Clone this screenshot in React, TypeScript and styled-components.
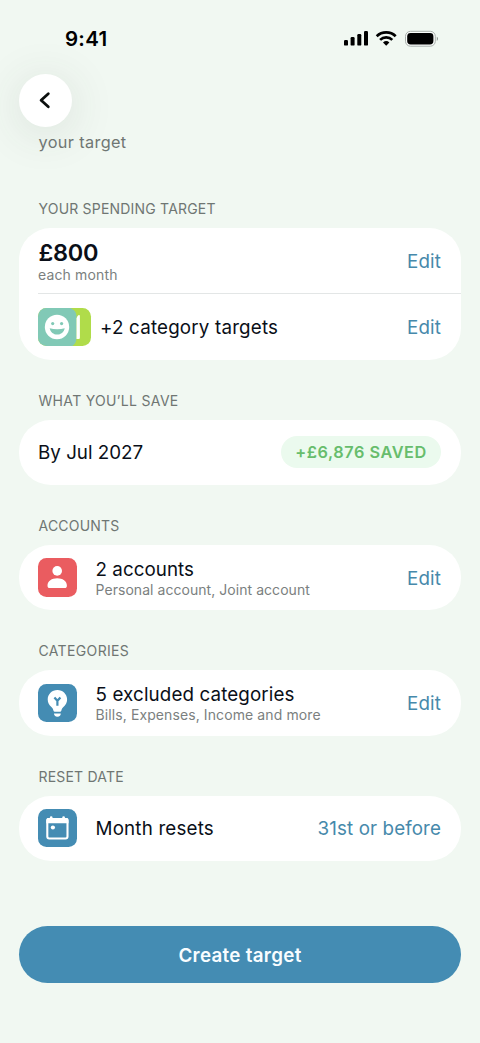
import React from "react";
import styled, { createGlobalStyle } from "styled-components";

const GlobalStyle = createGlobalStyle`
  * { box-sizing: border-box; }
  body { margin: 0; background: #f1f8f2; }
`;

const Screen = styled.div`
  width: 480px;
  height: 1043px;
  overflow: hidden;
  background: #f1f8f2;
  font-family: Inter, "Liberation Sans", sans-serif;
  color: #0a0f18;
  display: flex;
  flex-direction: column;
`;

const StatusBar = styled.header`
  height: 74px;
  flex: none;
  display: flex;
  justify-content: space-between;
  padding: 26px 41px 0 65px;
`;

const Clock = styled.span`
  font-size: 20.5px;
  line-height: 26px;
  font-weight: 600;
  letter-spacing: 0.25px;
  color: #000;
`;

const StatusIcons = styled.div`
  display: flex;
  align-items: center;
  height: 26px;
`;

const BackButton = styled.button`
  width: 53px;
  height: 53px;
  flex: none;
  margin-left: 19px;
  padding: 0;
  border: 0;
  border-radius: 50%;
  background: #fff;
  box-shadow: 0 6px 44px 4px rgba(60, 66, 62, 0.1);
  display: flex;
  align-items: center;
  justify-content: center;
`;

const Intro = styled.p`
  margin: 3px 0 0 38.5px;
  height: 25px;
  line-height: 24px;
  font-size: 16.3px;
  letter-spacing: 0.35px;
  color: #6f7673;
`;

const Sections = styled.main`
  display: flex;
  flex-direction: column;
  gap: 31px;
  padding: 44px 19px 0;
`;

const Section = styled.section`
  display: flex;
  flex-direction: column;
  gap: 9px;
`;

const Label = styled.h2<{ $tracking: number }>`
  margin: 0 0 0 19.5px;
  height: 20px;
  line-height: 20px;
  font-size: 14px;
  font-weight: 400;
  letter-spacing: ${(p) => p.$tracking}px;
  color: #6f7673;
`;

const Card = styled.div`
  background: #fff;
  border-radius: 32px;
  overflow: hidden;
`;

const Row = styled.div<{ $divided?: boolean }>`
  display: flex;
  align-items: center;
  height: ${(p) => (p.$divided ? "66.4px" : "65.3px")};
  margin-left: 19px;
  padding-right: 20px;
  border-top: ${(p) => (p.$divided ? "1px solid #e3e6e6" : "0")};
`;

const Texts = styled.div<{ $gap?: number }>`
  display: flex;
  flex-direction: column;
  flex: 1;
  margin-left: ${(p) => p.$gap ?? 0}px;
  padding-top: 2px;
`;

const Title = styled.span<{ $tracking?: number }>`
  font-size: 18.8px;
  line-height: 22px;
  letter-spacing: ${(p) => p.$tracking ?? 0.12}px;
  white-space: nowrap;
`;

const Amount = styled.span`
  padding-left: 0.5px;
  font-size: 23.5px;
  line-height: 26px;
  font-weight: 600;
  letter-spacing: -0.3px;
`;

const Caption = styled.span<{ $tracking?: number }>`
  font-size: 14px;
  line-height: 18px;
  letter-spacing: ${(p) => p.$tracking ?? 0.05}px;
  color: #7b7f80;
  white-space: nowrap;
`;

const Action = styled.a`
  padding-top: 2px;
  font-size: 18.8px;
  line-height: 22px;
  letter-spacing: 0.1px;
  color: #4689ab;
  white-space: nowrap;
`;

const Pill = styled.span`
  height: 32px;
  width: 160px;
  border-radius: 16px;
  background: #ebfaee;
  color: #67bd6c;
  font-size: 16.3px;
  font-weight: 600;
  line-height: 32px;
  letter-spacing: 0.55px;
  text-align: center;
  white-space: nowrap;
`;

const Tile = styled.span<{ $color: string }>`
  width: 38.5px;
  height: 38.5px;
  flex: none;
  border-radius: 8.5px;
  background: ${(p) => p.$color};
  display: flex;
`;

const TileStack = styled.span`
  width: 53px;
  height: 38.5px;
  flex: none;
  border-radius: 8.5px;
  overflow: hidden;
  background: #b0dc4a;
  display: flex;
`;

const Submit = styled.button`
  width: 442px;
  height: 57px;
  flex: none;
  margin: 65px 0 0 19px;
  padding: 2px 0 0;
  border: 0;
  border-radius: 28.5px;
  background: #448cb3;
  color: #f8fdff;
  font-family: inherit;
  font-size: 18.8px;
  font-weight: 600;
  letter-spacing: 0.3px;
`;

const Signal = () => (
  <svg width="98" height="26" viewBox="341 26 98 26">
    <rect x="344" y="40" width="4" height="5.6" rx="1.2" />
    <rect x="350.6" y="37" width="4" height="8.6" rx="1.2" />
    <rect x="357.3" y="34" width="4" height="11.6" rx="1.2" />
    <rect x="364" y="31" width="4" height="14.6" rx="1.2" />
    <g fill="none" stroke="#000" strokeWidth="2.7">
      <path d="M376.7 36.2a13.7 13.7 0 0 1 19 0" />
      <path d="M380.1 39.9a8.8 8.8 0 0 1 12.2 0" />
    </g>
    <path d="M386.2 45.8l-3.2-3.2a4.7 4.7 0 0 1 6.4 0z" />
    <rect x="405.5" y="31.3" width="29.8" height="14.9" rx="5" fill="#fafdfb" stroke="#a9afab" strokeWidth="1" />
    <rect x="407.2" y="33" width="26.2" height="11.4" rx="3.4" />
    <path d="M436.8 36.8c1.6.6 1.6 3.5 0 4.1z" fill="#909692" />
  </svg>
);

const Smile = () => (
  <svg width="53" height="38.5" viewBox="0 0 53 38.5">
    <path d="M0 0H32.5C36 1.5 38.5 4.5 38.5 8.5V30C38.5 34 36.5 37 33.5 38.5H0z" fill="#81c9b6" />
    <circle cx="19" cy="19" r="12.2" fill="#fff" />
    <circle cx="14.7" cy="15.6" r="1.6" fill="#81c9b6" />
    <circle cx="23.6" cy="15.6" r="1.6" fill="#81c9b6" />
    <path d="M11.7 20.3c4.5 1.2 10.5 1.2 15 0-.8 4-3.8 6.3-7.5 6.3s-6.7-2.3-7.5-6.3z" fill="#81c9b6" />
    <path d="M38.5 10.5c.6-2 1.5-3.4 2.6-3.4.5 0 .8.3.8.9v21.500c0 1-.6 1.500-1.500 1.500h-1.900z" fill="#fff" />
  </svg>
);

const Person = () => (
  <svg width="38.5" height="38.5" viewBox="0 0 38.5 38.5" fill="#fff">
    <circle cx="19.2" cy="12.9" r="4.8" />
    <path d="M9.5 27.7c0-4.7 4.4-7.4 9.7-7.4s9.7 2.7 9.7 7.4c0 1.7-.8 2.300-2.200 2.300h-15c-1.400 0-2.200-.6-2.200-2.300z" />
  </svg>
);

const Bulb = () => (
  <svg width="38.5" height="38.5" viewBox="0 0 38.5 38.5">
    <path
      d="M19.4 6c-5.5 0-9.7 4.2-9.7 9.5 0 3.3 1.5 5.6 3.7 7.5 1.5 1.3 1.6 2.3 2.1 3.7.2.7.6 1 1.3 1h5.2c.7 0 1.1-.3 1.3-1 .5-1.4.6-2.4 2.1-3.7 2.2-1.9 3.7-4.2 3.7-7.5C29.1 10.2 24.9 6 19.4 6z"
      fill="#fff"
    />
    <path d="M16 29.5h6.8c0 2-1.2 3.2-3.4 3.2S16 31.5 16 29.5z" fill="#fff" />
    <path d="M16.4 13.5l3 3.3 3-3.3M19.4 16.6v5.2" fill="none" stroke="#448cb3" strokeWidth="2.2" />
  </svg>
);

const Calendar = () => (
  <svg width="38.5" height="38.5" viewBox="0 0 38.5 38.5">
    <rect x="9.3" y="10" width="20.2" height="19.5" rx="2" fill="none" stroke="#fff" strokeWidth="2.1" />
    <path d="M8.3 11c0-1.5.8-2.1 2-2.1h18.2c1.2 0 2 .6 2 2.1v3.2H8.3z" fill="#fff" />
    <path d="M13.2 8.6v2M25.6 8.6v2" stroke="#fff" strokeWidth="2.7" strokeLinecap="round" />
    <circle cx="14.9" cy="18.5" r="2.1" fill="#fff" />
  </svg>
);

export default function App() {
  return (
    <Screen>
      <GlobalStyle />
      <StatusBar>
        <Clock>9:41</Clock>
        <StatusIcons>
          <Signal />
        </StatusIcons>
      </StatusBar>
      <BackButton aria-label="Back">
        <svg width="53" height="53" viewBox="0 0 53 53" fill="none" stroke="#0c0f0e" strokeWidth="2.8" strokeLinecap="round" strokeLinejoin="round">
          <path d="M29.300 19.700l-7.200 6.500 7.200 6.500" />
        </svg>
      </BackButton>
      <Intro>your target</Intro>
      <Sections>
        <Section>
          <Label $tracking={0.2}>YOUR SPENDING TARGET</Label>
          <Card>
            <Row>
              <Texts>
                <Amount>£800</Amount>
                <Caption $tracking={0.15}>each month</Caption>
              </Texts>
              <Action>Edit</Action>
            </Row>
            <Row $divided>
              <TileStack>
                <Smile />
              </TileStack>
              <Texts $gap={9}>
                <Title $tracking={0.18}>+2 category targets</Title>
              </Texts>
              <Action>Edit</Action>
            </Row>
          </Card>
        </Section>
        <Section>
          <Label $tracking={0.32}>WHAT YOU’LL SAVE</Label>
          <Card>
            <Row>
              <Texts>
                <Title $tracking={0}>By Jul 2027</Title>
              </Texts>
              <Pill>+£6,876 SAVED</Pill>
            </Row>
          </Card>
        </Section>
        <Section>
          <Label $tracking={0.2}>ACCOUNTS</Label>
          <Card>
            <Row>
              <Tile $color="#ea5c60">
                <Person />
              </Tile>
              <Texts $gap={19}>
                <Title $tracking={0.05}>2 accounts</Title>
                <Caption>Personal account, Joint account</Caption>
              </Texts>
              <Action>Edit</Action>
            </Row>
          </Card>
        </Section>
        <Section>
          <Label $tracking={0.35}>CATEGORIES</Label>
          <Card>
            <Row>
              <Tile $color="#448cb3">
                <Bulb />
              </Tile>
              <Texts $gap={19}>
                <Title>5 excluded categories</Title>
                <Caption $tracking={0.1}>Bills, Expenses, Income and more</Caption>
              </Texts>
              <Action>Edit</Action>
            </Row>
          </Card>
        </Section>
        <Section>
          <Label $tracking={0.2}>RESET DATE</Label>
          <Card>
            <Row>
              <Tile $color="#448cb3">
                <Calendar />
              </Tile>
              <Texts $gap={19}>
                <Title $tracking={0.18}>Month resets</Title>
              </Texts>
              <Action>31st or before</Action>
            </Row>
          </Card>
        </Section>
      </Sections>
      <Submit>Create target</Submit>
    </Screen>
  );
}
